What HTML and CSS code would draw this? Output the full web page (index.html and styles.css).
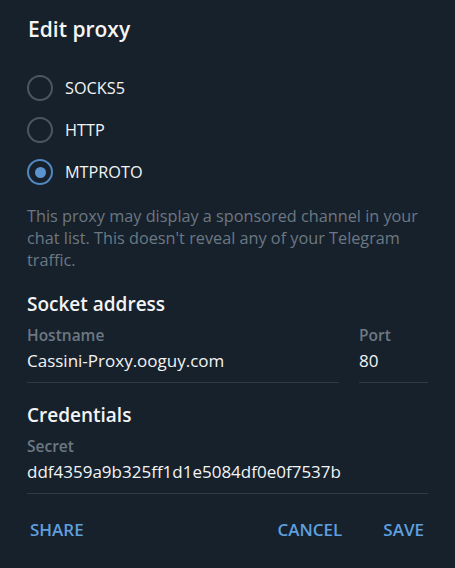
FILE: index.html
```html
<!DOCTYPE html>
<html>
<head>
<meta charset="utf-8">
<link rel="stylesheet" href="styles.css">
</head>
<body>
<div class="dialog">
  <h1 class="title">Edit proxy</h1>
  <div class="radios">
    <div class="radio"><span class="circle"></span><span class="radio-label">SOCKS5</span></div>
    <div class="radio"><span class="circle"></span><span class="radio-label">HTTP</span></div>
    <div class="radio checked"><span class="circle"><span class="dot"></span></span><span class="radio-label">MTPROTO</span></div>
  </div>
  <p class="desc">This proxy may display a sponsored channel in your chat list. This doesn't reveal any of your Telegram traffic.</p>
  <h2 class="section">Socket address</h2>
  <div class="row">
    <div class="field grow">
      <div class="label">Hostname</div>
      <div class="value">Cassini-Proxy.ooguy.com</div>
    </div>
    <div class="field port">
      <div class="label">Port</div>
      <div class="value">80</div>
    </div>
  </div>
  <h2 class="section cred">Credentials</h2>
  <div class="field">
    <div class="label">Secret</div>
    <div class="value">ddf4359a9b325ff1d1e5084df0e0f7537b</div>
  </div>
  <div class="actions">
    <span class="btn">SHARE</span>
    <span class="spacer"></span>
    <span class="btn">CANCEL</span>
    <span class="btn">SAVE</span>
  </div>
</div>
</body>
</html>
```
FILE: styles.css
```css
html, body {
  margin: 0;
  padding: 0;
  background: #17212b;
  height: 100%;
}
body {
  font-family: "Open Sans", "Noto Sans", sans-serif;
  color: #f3f4f5;
}
.dialog {
  padding: 15px 27px 0 27px;
}
.title {
  margin: 0;
  padding-left: 1px;
  font-size: 21px;
  font-weight: 600;
  line-height: 28px;
  color: #f5f5f5;
}
.radios {
  margin-top: 24px;
  display: flex;
  flex-direction: column;
}
.radio {
  height: 42px;
  display: flex;
  align-items: center;
  gap: 12px;
}
.circle {
  width: 22px;
  height: 22px;
  border: 2px solid #4b5661;
  border-radius: 50%;
  display: flex;
  align-items: center;
  justify-content: center;
  flex: none;
}
.checked .circle {
  border-color: #5288c1;
}
.dot {
  width: 11px;
  height: 11px;
  border-radius: 50%;
  background: #5b93cf;
}
.radio-label {
  font-size: 16.25px;
  line-height: 22px;
  color: #f3f4f5;
}
.desc {
  margin: 12px 0 0 0;
  font-size: 16.25px;
  line-height: 22px;
  color: #6c7883;
}
.section {
  margin: 20px 0 0 0;
  font-size: 19px;
  font-weight: 600;
  line-height: 26px;
  color: #f3f4f5;
}
.section.cred {
  margin-top: 19px;
}
.row {
  display: flex;
  gap: 20px;
}
.grow {
  flex: 1;
}
.port {
  width: 69px;
  flex: none;
}
.field {
  margin-top: 8px;
  padding-bottom: 9px;
  border-bottom: 1px solid #2f3a45;
}
.label {
  font-size: 15.5px;
  font-weight: 600;
  line-height: 20px;
  color: #6c7883;
}
.value {
  margin-top: 4px;
  font-size: 17px;
  line-height: 24px;
  color: #f3f4f5;
}
.actions {
  display: flex;
  align-items: center;
  margin: 26px 4px 0 3px;
  gap: 41px;
}
.spacer {
  flex: 1;
}
.btn {
  font-size: 17px;
  font-weight: 600;
  line-height: 20px;
  color: #5f9fde;
}
```
